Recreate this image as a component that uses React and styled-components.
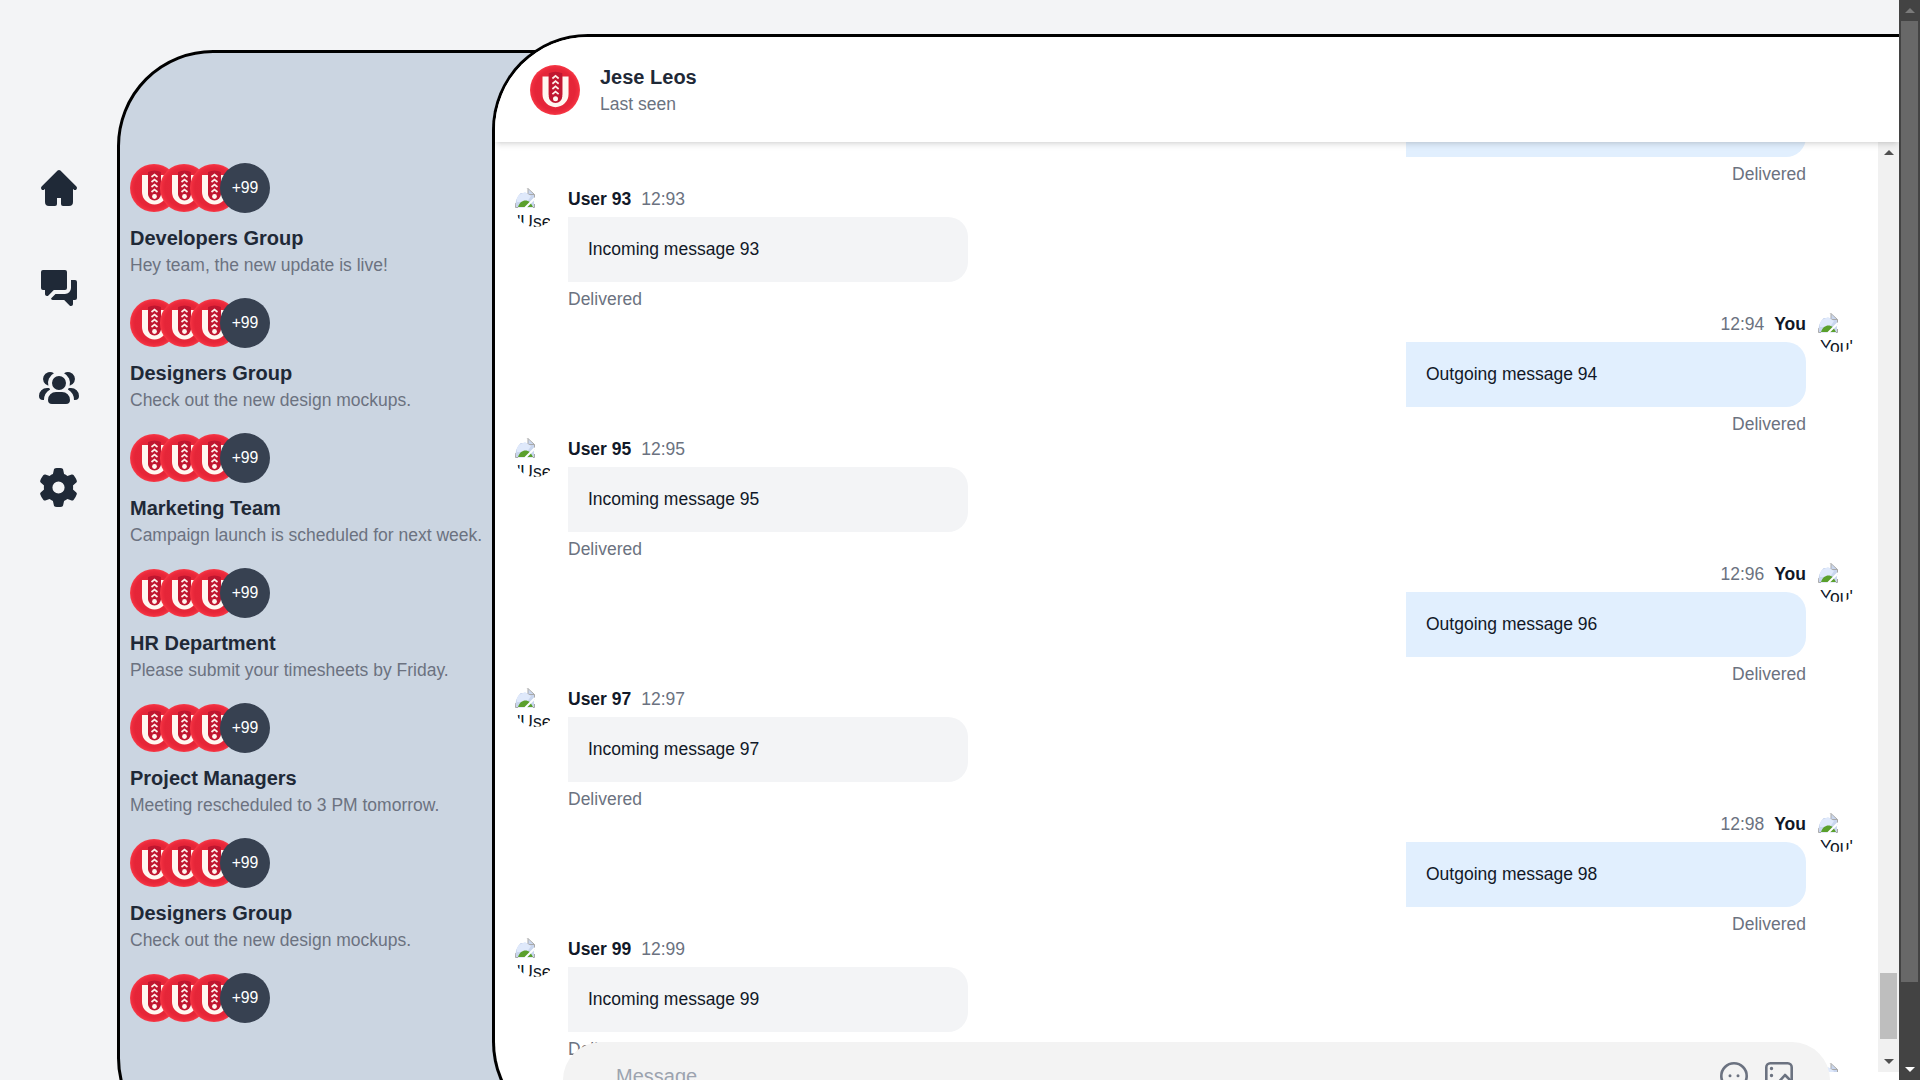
import React from 'react';
import styled, { createGlobalStyle } from 'styled-components';
import { FaGear } from 'react-icons/fa6';

const Global = createGlobalStyle`
  html, body { margin: 0; padding: 0; height: 100%; overflow: hidden; }
  * { box-sizing: border-box; }
  body { font-family: "Liberation Sans", Arial, sans-serif; background: #f3f4f6; color: #111827; }
`;

const Page = styled.div`
  display: flex;
  width: 1920px;
  height: 1080px;
  overflow: hidden;
`;
const Main = styled.main`
  flex: 1;
  display: flex;
  align-items: flex-start;
  min-width: 0;
  height: 100%;
  overflow: hidden;
  background: #f3f4f6;
`;
const Nav = styled.nav`
  flex: none;
  width: 117px;
  padding: 164px 0 0 1px;
  display: flex;
  flex-direction: column;
  align-items: center;
  gap: 52px;
`;
const NavIcon = styled.svg`
  width: 48px;
  height: 48px;
  fill: #1f2937;
  display: block;
`;
const GearIcon = styled(FaGear)`
  width: 39px;
  height: 39px;
  margin: 3.5px 5.5px 5.5px 3.5px;
  color: #1f2937;
  display: block;
`;
const Sidebar = styled.aside`
  flex: none;
  width: 523px;
  height: 1104px;
  margin-top: 50px;
  padding: 110px 0 0 10px;
  background: #cbd5e1;
  border: 3px solid #000;
  border-radius: 96px;
`;
const Group = styled.div`
  margin-bottom: 21px;
`;
const Stack = styled.div`
  display: flex;
  align-items: center;
  height: 50px;
`;
const StackLogo = styled.div`
  width: 48px;
  height: 48px;
  margin-right: -18px;
  flex: none;
`;
const More = styled.div`
  position: relative;
  width: 50px;
  height: 50px;
  border-radius: 50%;
  background: #374151;
  color: #fff;
  font-size: 15.75px;
  display: flex;
  align-items: center;
  justify-content: center;
`;
const GroupTitle = styled.div`
  margin-top: 11px;
  font-size: 20px;
  line-height: 28px;
  font-weight: 700;
  color: #1f2937;
`;
const GroupText = styled.div`
  margin-top: 1px;
  font-size: 17.5px;
  line-height: 24px;
  color: #6b7280;
  white-space: nowrap;
`;
const Chat = styled.section`
  position: relative;
  flex: 1;
  min-width: 0;
  height: 1104px;
  margin: 34px 0 0 -148px;
  display: flex;
  flex-direction: column;
  background: #fff;
  border: 3px solid #000;
  border-right: 0;
  border-radius: 96px 0 0 96px;
  overflow: hidden;
`;
const Header = styled.header`
  position: relative;
  z-index: 2;
  flex: none;
  height: 105px;
  padding-left: 35px;
  display: flex;
  align-items: center;
  gap: 20px;
  background: #fff;
  box-shadow: 0 4px 6px -1px rgba(0,0,0,.1), 0 2px 4px -2px rgba(0,0,0,.1);
`;
const HeaderLogo = styled.div`
  width: 50px;
  height: 50px;
`;
const HeaderInfo = styled.div`
  padding-bottom: 1px;
`;
const HeaderName = styled.div`
  font-size: 20px;
  line-height: 28px;
  font-weight: 700;
  color: #1f2937;
`;
const HeaderSub = styled.div`
  margin-top: 1px;
  font-size: 17.5px;
  line-height: 24px;
  color: #6b7280;
`;
const ChatBody = styled.div`
  flex: none;
  height: 930px;
  display: flex;
`;
const Messages = styled.div`
  flex: 1;
  min-width: 0;
  overflow: hidden;
  padding: 0 20px;
`;
const List = styled.div`
  margin-top: -81px;
`;
const Row = styled.div`
  display: flex;
  flex-direction: ${p => (p.$out ? 'row-reverse' : 'row')};
  gap: ${p => (p.$out ? '12px' : '13px')};
  height: 125px;
`;
const Avatar = styled.div`
  flex: none;
  width: 40px;
  height: 40px;
  margin-top: 1px;
  border-radius: 50%;
  overflow: hidden;
  font-size: 17.5px;
  color: #111827;
`;
const BrokenIcon = styled.svg`
  display: block;
  width: 20px;
  height: 20px;
  margin-top: 1px;
`;
const AvatarAlt = styled.div`
  padding-left: 2px;
  white-space: nowrap;
  line-height: 20px;
  margin-top: 4px;
`;
const Body = styled.div`
  width: 400px;
  display: flex;
  flex-direction: column;
  align-items: ${p => (p.$out ? 'flex-end' : 'flex-start')};
`;
const Meta = styled.div`
  display: flex;
  gap: 10px;
  height: 24px;
  margin-top: 1px;
  line-height: 24px;
  font-size: 17.5px;
`;
const Author = styled.span`
  font-weight: 700;
  color: #111827;
`;
const Time = styled.span`
  color: #6b7280;
`;
const Bubble = styled.div`
  align-self: stretch;
  height: 65px;
  margin: 6px 0 5px;
  padding: 0 20px;
  display: flex;
  align-items: center;
  font-size: 17.5px;
  color: #111827;
  background: ${p => (p.$out ? '#e1effe' : '#f3f4f6')};
  border-radius: 0 20px 20px 0;
`;
const Status = styled.div`
  font-size: 17.5px;
  line-height: 24px;
  color: #6b7280;
`;
const InputBar = styled.div`
  position: absolute;
  z-index: 3;
  left: 68px;
  right: 69px;
  bottom: 17px;
  height: 76px;
  padding: 0 37px 8px 53px;
  display: flex;
  align-items: center;
  background: #f3f3f3;
  border-radius: 40px;
`;
const Placeholder = styled.span`
  flex: 1;
  font-size: 20px;
  color: #9ca3af;
`;
const BarIcons = styled.div`
  display: flex;
  gap: 17px;
`;
const BarIcon = styled.svg`
  display: block;
  width: 28px;
  height: 28px;
  fill: none;
  stroke: #6b7280;
  stroke-width: 2.6;
  stroke-linecap: round;
  stroke-linejoin: round;
`;
const Scrollbar = styled.div`
  flex: none;
  width: 21px;
  display: flex;
  flex-direction: column;
  background: ${p => (p.$dark ? '#434343' : '#f1f1f1')};
`;
const ArrowBox = styled.div`
  flex: none;
  height: 21px;
  display: flex;
  align-items: center;
  justify-content: center;
`;
const Arrow = styled.div`
  width: 0;
  height: 0;
  border-left: 5px solid transparent;
  border-right: 5px solid transparent;
  ${p => (p.$down ? 'border-top' : 'border-bottom')}: 5px solid ${p => p.$color};
`;
const Track = styled.div`
  flex: 1;
  min-height: 0;
  padding: 0 2px;
`;
const Thumb = styled.div`
  background: ${p => (p.$dark ? '#686868' : '#bebebe')};
`;
const LogoSvg = styled.svg`
  display: block;
  width: 100%;
  height: 100%;
  filter: blur(0.35px);
`;

const UniLogo = ({ id }) => (
  <LogoSvg viewBox="0 0 48 48">
    <defs>
      <radialGradient id={id} cx="50%" cy="50%" r="50%">
        <stop offset="0%" stopColor="#e8283a" />
        <stop offset="80%" stopColor="#e52538" />
        <stop offset="92%" stopColor="#ee2c3e" />
        <stop offset="100%" stopColor="#f83a46" />
      </radialGradient>
    </defs>
    <circle cx="24" cy="24" r="24" fill={`url(#${id})`} />
    <path d="M12 11 V28 a12.5 12.5 0 0 0 25 0 V11 H31 V28 a6.5 6.5 0 0 1 -13 0 V11 Z" fill="#fff6f0" />
    <path d="M18 8 Q24.5 5 31 8 V30 a6.5 6.5 0 0 1 -13 0 Z" fill="#c01630" />
    <g fill="none" stroke="#ffeee8" strokeWidth="1.7">
      <path d="M21.5 13 L24.5 10.5 L27.5 13" />
      <path d="M21.5 18 L24.5 15.5 L27.5 18" />
      <path d="M21.5 23 L24.5 20.5 L27.5 23" />
      <path d="M21.5 28 L24.5 25.5 L27.5 28" />
    </g>
    <circle cx="24.5" cy="32.5" r="2.4" fill="#fff6f0" />
  </LogoSvg>
);

const Broken = () => (
  <BrokenIcon viewBox="0 0 20 20">
    <path d="M0.5 5 H13 V1 L19 6 V19.5 H0.5 Z" fill="#c9d6ee" />
    <path d="M13 0.5 H3 V5 M13 0.5 L19.5 6.5 V12 M13 0.5 V6.5 H19.5" fill="none" stroke="#a9a9a9" strokeWidth="1" />
    <path d="M2 8 L10 4 L16 8 L12 14 L2 14 Z" fill="#dfe9fb" />
    <path d="M3 19 C5 12 11 11 15 14 L18 19 Z" fill="#5aa02c" />
    <path d="M0.5 15 V19.5 H3 M18 19.5 H19.5 V16" fill="none" stroke="#a9a9a9" strokeWidth="1" />
    <path d="M10 20 L20 10" stroke="#fff" strokeWidth="2" />
  </BrokenIcon>
);

const groups = [
  ['Developers Group', 'Hey team, the new update is live!'],
  ['Designers Group', 'Check out the new design mockups.'],
  ['Marketing Team', 'Campaign launch is scheduled for next week.'],
  ['HR Department', 'Please submit your timesheets by Friday.'],
  ['Project Managers', 'Meeting rescheduled to 3 PM tomorrow.'],
  ['Designers Group', 'Check out the new design mockups.'],
  [null, null],
];

const AvatarStack = ({ index }) => (
  <Stack>
    {[0, 1, 2].map(i => (
      <StackLogo key={i}>
        <UniLogo id={`logo-${index}-${i}`} />
      </StackLogo>
    ))}
    <More>+99</More>
  </Stack>
);

const rows = [92, 93, 94, 95, 96, 97, 98, 99, 100];

const Message = ({ n }) => {
  const out = n % 2 === 0;
  const time = `12:${n}`;
  return (
    <Row $out={out}>
      <Avatar>
        <Broken />
        <AvatarAlt>{out ? "You'" : "'User"}</AvatarAlt>
      </Avatar>
      <Body $out={out}>
        <Meta>
          {out ? (
            <>
              <Time>{time}</Time>
              <Author>You</Author>
            </>
          ) : (
            <>
              <Author>{`User ${n}`}</Author>
              <Time>{time}</Time>
            </>
          )}
        </Meta>
        <Bubble $out={out}>{`${out ? 'Outgoing' : 'Incoming'} message ${n}`}</Bubble>
        <Status>Delivered</Status>
      </Body>
    </Row>
  );
};

export default function App() {
  return (
    <>
      <Global />
      <Page>
        <Main>
          <Nav>
            <NavIcon viewBox="0 0 24 24">
              <path fillRule="evenodd" clipRule="evenodd" d="M11.293 3.293a1 1 0 0 1 1.414 0l6 6 2 2a1 1 0 0 1-1.414 1.414L19 12.414V19a2 2 0 0 1-2 2h-3a1 1 0 0 1-1-1v-3h-2v3a1 1 0 0 1-1 1H7a2 2 0 0 1-2-2v-6.586l-.293.293a1 1 0 0 1-1.414-1.414l2-2 6-6Z" />
            </NavIcon>
            <NavIcon viewBox="0 0 24 24">
              <path fillRule="evenodd" clipRule="evenodd" d="M4 3a1 1 0 0 0-1 1v8a1 1 0 0 0 1 1h1v2a1 1 0 0 0 1.707.707L9.414 13H15a1 1 0 0 0 1-1V4a1 1 0 0 0-1-1H4Z" />
              <path fillRule="evenodd" clipRule="evenodd" d="M8.023 17.215c.033-.03.066-.062.098-.094L10.243 15H15a3 3 0 0 0 3-3V8h2a1 1 0 0 1 1 1v8a1 1 0 0 1-1 1h-1v2a1 1 0 0 1-1.707.707L14.586 18H9a1 1 0 0 1-.977-.785Z" />
            </NavIcon>
            <NavIcon viewBox="0 0 24 24">
              <path fillRule="evenodd" clipRule="evenodd" d="M12 6a3.5 3.5 0 1 0 0 7 3.5 3.5 0 0 0 0-7Zm-1.5 8a4 4 0 0 0-4 4 2 2 0 0 0 2 2h7a2 2 0 0 0 2-2 4 4 0 0 0-4-4h-3Zm6.82-3.096a5.51 5.51 0 0 0-2.797-6.293 3.5 3.5 0 1 1 2.796 6.292ZM19.5 18h.5a2 2 0 0 0 2-2 4 4 0 0 0-4-4h-1.1a5.503 5.503 0 0 1-.471.762A5.998 5.998 0 0 1 19.5 18ZM6.68 10.904a5.51 5.51 0 0 1 2.797-6.293 3.5 3.5 0 1 0-2.796 6.292ZM4.5 18H4a2 2 0 0 1-2-2 4 4 0 0 1 4-4h1.1c.134.268.291.523.471.762A5.998 5.998 0 0 0 4.5 18Z" />
            </NavIcon>
            <GearIcon />
          </Nav>

          <Sidebar>
            {groups.map(([title, text], i) => (
              <Group key={i}>
                <AvatarStack index={i} />
                {title && <GroupTitle>{title}</GroupTitle>}
                {text && <GroupText>{text}</GroupText>}
              </Group>
            ))}
          </Sidebar>

          <Chat>
            <Header>
              <HeaderLogo>
                <UniLogo id="logo-header" />
              </HeaderLogo>
              <HeaderInfo>
                <HeaderName>Jese Leos</HeaderName>
                <HeaderSub>Last seen</HeaderSub>
              </HeaderInfo>
            </Header>
            <ChatBody>
              <Messages>
                <List>
                  {rows.map(n => (
                    <Message key={n} n={n} />
                  ))}
                </List>
              </Messages>
              <Scrollbar>
                <ArrowBox><Arrow $color="#505050" /></ArrowBox>
                <Track>
                  <Thumb style={{ marginTop: 810, height: 66 }} />
                </Track>
                <ArrowBox><Arrow $down $color="#505050" /></ArrowBox>
              </Scrollbar>
            </ChatBody>
            <InputBar>
              <Placeholder>Message</Placeholder>
              <BarIcons>
                <BarIcon viewBox="0 0 28 28">
                  <circle cx="14" cy="14" r="12.7" />
                  <path d="M10 13.8h.01M18 13.8h.01" strokeWidth="3" />
                </BarIcon>
                <BarIcon viewBox="0 0 28 28">
                  <rect x="1.3" y="1.3" width="25.4" height="25.4" rx="4" />
                  <path d="M6.5 6.5h.01M6.5 13.5h.01" strokeWidth="3.4" />
                  <path d="M12 22 L20 13 L27 20" />
                </BarIcon>
              </BarIcons>
            </InputBar>
          </Chat>
        </Main>

        <Scrollbar $dark>
          <ArrowBox><Arrow $color="#7a7a7a" /></ArrowBox>
          <Track>
            <Thumb $dark style={{ height: 961 }} />
          </Track>
          <ArrowBox><Arrow $down $color="#ffffff" /></ArrowBox>
        </Scrollbar>
      </Page>
    </>
  );
}
